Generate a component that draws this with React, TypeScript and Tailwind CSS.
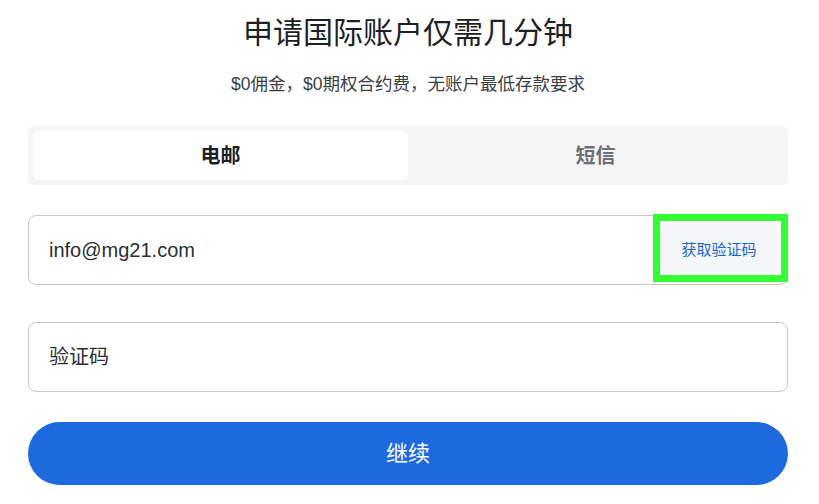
import { useState } from "react";

export default function App() {
  const [tab, setTab] = useState<"email" | "sms">("email");

  return (
    <div className="min-h-screen bg-white font-['Liberation_Sans','Noto_Sans_CJK_SC',sans-serif] text-[#1c2128]">
      <div className="ml-[28px] w-[760px] pt-[14px]">
        <h1 className="text-center text-[30px] leading-[38px] text-[#1c2128]">申请国际账户仅需几分钟</h1>
        <p className="mt-[20px] text-center text-[17.5px] leading-[24px] text-[#3b4048]">
          $0佣金，$0期权合约费，无账户最低存款要求
        </p>

        <div className="mt-[30px] flex h-[59px] rounded-[6px] bg-[#f5f5f5] p-[5px]">
          <button
            type="button"
            onClick={() => setTab("email")}
            className={`flex flex-1 items-center justify-center rounded-[6px] text-[20px] font-bold ${
              tab === "email" ? "bg-white text-[#1c2128]" : "text-[#6b6f76]"
            }`}
          >
            电邮
          </button>
          <button
            type="button"
            onClick={() => setTab("sms")}
            className={`flex flex-1 items-center justify-center rounded-[6px] text-[20px] font-bold ${
              tab === "sms" ? "bg-white text-[#1c2128]" : "text-[#6b6f76]"
            }`}
          >
            短信
          </button>
        </div>

        <div className="relative mt-[30px] flex h-[70px] items-center rounded-[8px] border border-[#c8c8c8] pl-[20px]">
          <span className="flex-1 text-[20px] text-[#2a2f36]">info@mg21.com</span>
          <button
            type="button"
            className="mr-[10px] flex h-[54px] w-[116px] items-center justify-center rounded-[8px] bg-[#f5f6f8] text-[15px] text-[#1a66cc]"
          >
            获取验证码
          </button>
          {/* highlight frame */}
          <div className="pointer-events-none absolute -top-[2px] -right-[1px] h-[68px] w-[135px] border-[7px] border-[#33ff33]" />
        </div>

        <div className="mt-[37px] flex h-[70px] items-center rounded-[8px] border border-[#c8c8c8] px-[20px]">
          <span className="text-[20px] text-[#2a2f36]">验证码</span>
        </div>

        <button
          type="button"
          className="mt-[30px] flex h-[63px] w-full items-center justify-center rounded-full bg-[#1d6adf] text-[22px] text-white"
        >
          继续
        </button>
      </div>
    </div>
  );
}
